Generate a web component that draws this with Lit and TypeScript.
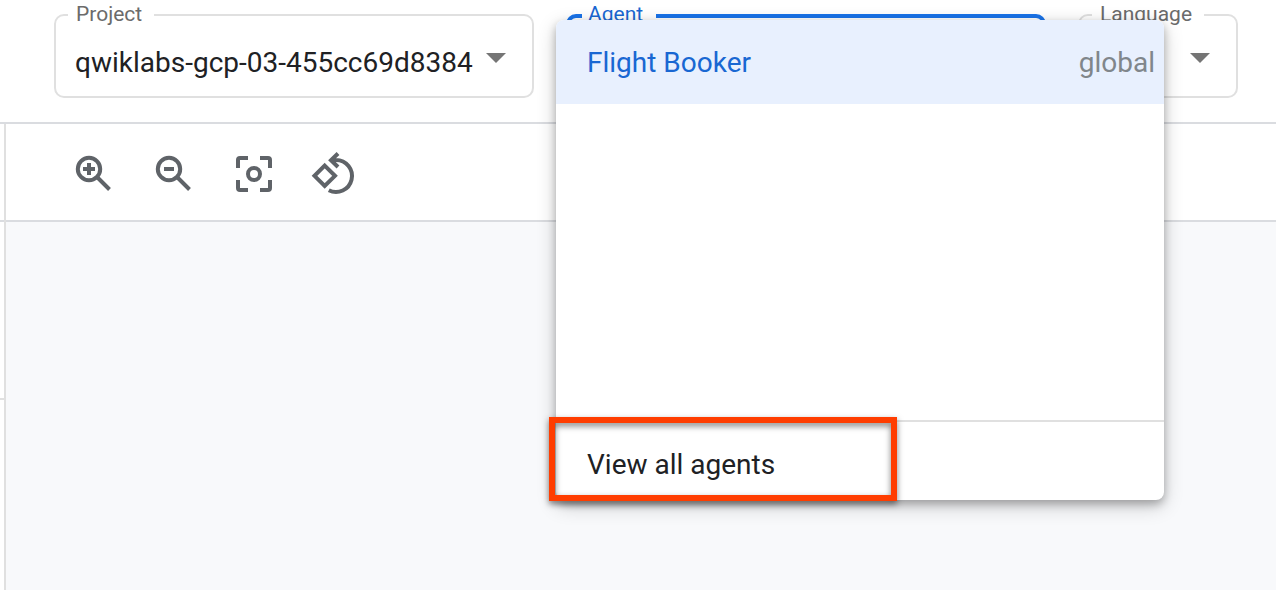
import { LitElement, html, css, svg } from "lit";
import { customElement, property, state } from "lit/decorators.js";

const icons = {
  zoomIn: svg`<circle cx="19" cy="19" r="11.2"/><path d="M27 27L39.5 39.5M19 13v12M13 19h12"/>`,
  zoomOut: svg`<circle cx="19" cy="19" r="11.2"/><path d="M27 27L39.5 39.5M14 19h10"/>`,
  focus: svg`<circle cx="24" cy="24" r="6"/><path d="M8 18V10a2 2 0 0 1 2-2h8M30 8h8a2 2 0 0 1 2 2v8M40 30v8a2 2 0 0 1-2 2h-8M18 40h-8a2 2 0 0 1-2-2v-8"/>`,
  rotate: svg`<path d="M14.7 15.6L25 25.8L14.7 36L4.5 25.8Z"/><path d="M28 3.5L21 10.2L28 17M21 10H26A16 16 0 1 1 18.8 40.3"/>`,
};

@customElement("outlined-select")
class OutlinedSelect extends LitElement {
  @property() label = "";
  @property() value = "";
  @property({ type: Boolean, reflect: true }) active = false;

  static styles = css`
    :host {
      display: block;
      min-width: 0;
    }
    .outline {
      margin: 0;
      padding: 0;
      min-width: 0;
      border: 2px solid #e0e0e0;
      border-radius: 10px;
      height: 95px;
      box-sizing: border-box;
    }
    .legend {
      margin-left: 12px;
      padding: 0 12px 2px 8px;
      font-size: 21px;
      line-height: 22px;
      color: #6b6b6b;
    }
    .row {
      display: flex;
      align-items: center;
      height: 69px;
      padding: 0 26px 0 19px;
    }
    .control {
      flex: 1;
      min-width: 0;
      appearance: none;
      border: 0;
      padding: 2px 0 0;
      background: none;
      outline: none;
      font: 28px/36px Roboto, sans-serif;
      color: #202124;
    }
    .arrow {
      flex: none;
      margin-bottom: 8px;
      fill: #757575;
      pointer-events: none;
    }
    :host([active]) .outline {
      border: 4px solid #1a73e8;
    }
    :host([active]) .legend {
      padding: 0 13px 4px 6px;
      color: #1967d2;
    }
  `;

  render() {
    return html`
      <fieldset class="outline">
        <legend class="legend"><label for="control">${this.label}</label></legend>
        <div class="row">
          <select id="control" class="control">
            <option>${this.value}</option>
          </select>
          <svg class="arrow" width="20" height="10" viewBox="0 0 20 10" aria-hidden="true">
            <path d="M0 0h20L10 10z" />
          </svg>
        </div>
      </fieldset>
    `;
  }
}

@customElement("agent-menu")
class AgentMenu extends LitElement {
  @state() private agents = [{ name: "Flight Booker", location: "global" }];

  static styles = css`
    :host {
      display: flex;
      flex-direction: column;
      background: #fff;
      border-radius: 8px;
      box-shadow: 0 4px 8px rgba(0, 0, 0, 0.25), 0 6px 20px rgba(0, 0, 0, 0.2);
    }
    button {
      border: 0;
      background: none;
      font: 28px/36px Roboto, sans-serif;
      text-align: left;
      cursor: pointer;
    }
    .list {
      flex: 1;
    }
    .agent {
      display: flex;
      justify-content: space-between;
      align-items: center;
      width: 100%;
      height: 84px;
      padding: 2px 9px 0 31px;
      border-radius: 8px 8px 0 0;
      background: #e8f0fe;
      color: #1967d2;
    }
    .location {
      color: #80868b;
    }
    .footer {
      position: relative;
      display: flex;
      height: 78px;
      border-top: 2px solid #e0e0e0;
    }
    .all {
      flex: 1;
      padding: 8px 31px 0;
      color: #202124;
    }
    .marker {
      position: absolute;
      left: -7px;
      top: -5px;
      width: 348px;
      height: 84px;
      box-sizing: border-box;
      border: 6px solid #ff3d00;
      filter: drop-shadow(0 3px 3px rgba(0, 0, 0, 0.5));
      pointer-events: none;
    }
  `;

  render() {
    return html`
      <div class="list">
        ${this.agents.map(
          (a) => html`<button class="agent">
            <span>${a.name}</span><span class="location">${a.location}</span>
          </button>`
        )}
      </div>
      <div class="footer">
        <button class="all">View all agents</button>
        <div class="marker"></div>
      </div>
    `;
  }
}

@customElement("app-root")
class AppRoot extends LitElement {
  static styles = css`
    :host {
      display: flex;
      flex-direction: column;
      height: 100vh;
      min-height: 520px;
      overflow: hidden;
      background: #fff;
      font-family: Roboto, sans-serif;
    }
    .header {
      display: flex;
      gap: 32px;
      padding: 3px 38px 24px 54px;
      border-bottom: 2px solid #dadce0;
    }
    .wide {
      flex: 3;
    }
    .narrow {
      flex: 1;
    }
    .agent-field {
      position: relative;
    }
    .menu {
      position: absolute;
      z-index: 1;
      left: -10px;
      top: 17px;
      width: 608px;
      height: 480px;
    }
    .body {
      flex: 1;
      display: flex;
    }
    .rail {
      width: 4px;
      border-right: 2px solid #e0e0e0;
    }
    .rail-head {
      height: 96px;
      border-bottom: 2px solid #dadce0;
    }
    .rail-section {
      height: 176px;
      border-bottom: 2px solid #e0e0e0;
    }
    .main {
      flex: 1;
      display: flex;
      flex-direction: column;
    }
    .toolbar {
      display: flex;
      gap: 32px;
      padding: 26px 64px 22px;
      border-bottom: 2px solid #dadce0;
    }
    .tool {
      display: block;
      padding: 0;
      border: 0;
      background: none;
      cursor: pointer;
    }
    .icon {
      display: block;
      fill: none;
      stroke: #5f6368;
      stroke-width: 4px;
    }
    .canvas {
      flex: 1;
      background: #f8f9fb;
    }
  `;

  private tool(label: string, icon: unknown) {
    return html`<button class="tool" aria-label=${label}>
      <svg class="icon" width="48" height="48" viewBox="0 0 48 48" aria-hidden="true">${icon}</svg>
    </button>`;
  }

  render() {
    return html`
      <header class="header">
        <outlined-select class="wide" label="Project" value="qwiklabs-gcp-03-455cc69d8384"></outlined-select>
        <div class="wide agent-field">
          <outlined-select label="Agent" active></outlined-select>
          <agent-menu class="menu"></agent-menu>
        </div>
        <outlined-select class="narrow" label="Language"></outlined-select>
      </header>
      <div class="body">
        <aside class="rail">
          <div class="rail-head"></div>
          <div class="rail-section"></div>
        </aside>
        <main class="main">
          <div class="toolbar" role="toolbar" aria-label="Canvas tools">
            ${this.tool("Zoom in", icons.zoomIn)}
            ${this.tool("Zoom out", icons.zoomOut)}
            ${this.tool("Center view", icons.focus)}
            ${this.tool("Reset layout", icons.rotate)}
          </div>
          <div class="canvas"></div>
        </main>
      </div>
    `;
  }
}
